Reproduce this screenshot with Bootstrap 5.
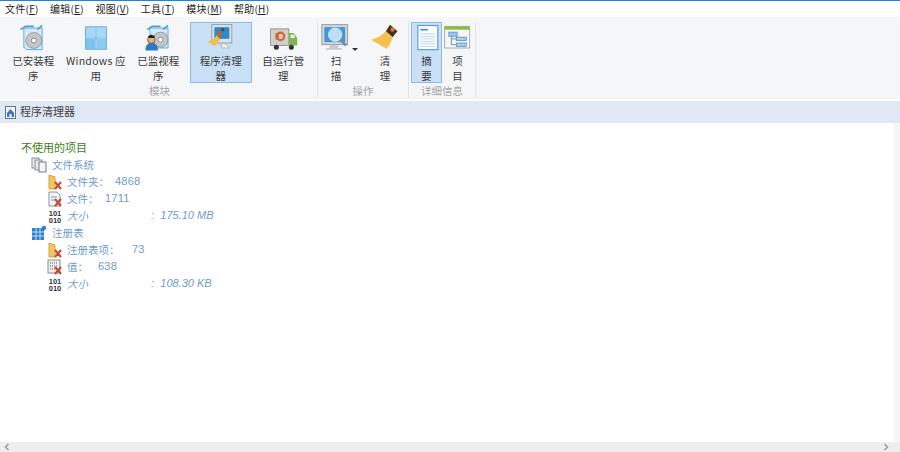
<!DOCTYPE html>
<html lang="zh"><head><meta charset="utf-8"><title>程序清理器</title>
<link href="https://cdn.jsdelivr.net/npm/bootstrap@5.3.0/dist/css/bootstrap.min.css" rel="stylesheet">
<style>
html,body{height:452px;overflow:hidden;background:#fff}
body{font-family:"Noto Sans CJK SC","Liberation Sans",sans-serif;font-size:11px;color:#333;line-height:1.2}
.shell{height:452px;border-top:1px solid #1b86d8}
.menubar{height:16px;padding-left:5px;gap:11.5px;font-size:10px;letter-spacing:.25px;color:#222;align-items:center}
.ribbon{height:82px;background:#f5f6f7;padding:5px 0 0 2px}
.rgroup{border-right:1px solid #e3e4e6;height:76px;position:relative}
.gwide{width:316px}
.gact{width:91px}
.gdetail{width:67px;padding-left:2px}
.rbtn{width:62.5px;height:61px;border:1px solid transparent;align-items:center;text-align:center;color:#3a3a3a;font-size:10.5px;line-height:15px;white-space:nowrap}
.rbtn svg{height:30px;width:30px;flex:none}
.rbtn.on{background:#c9e0f7;border-color:#8fbce6}
.narrow{width:31px}
.scanbtn{width:36px;position:relative}
.cleanbtn{width:46px;margin-left:8px}
.caret-mark{position:absolute;left:33px;top:25px;width:0;height:0;border-left:3px solid transparent;border-right:3px solid transparent;border-top:3px solid #333}
.latin{letter-spacing:.3px}
.glabel{position:absolute;left:0;right:0;bottom:0;height:15px;text-align:center;color:#a3a5a8;font-size:10.5px;line-height:15px}
.crumb{height:23px;margin-top:2px;background:#dfe8f4;padding-left:5px;gap:4px;align-items:center;font-size:11px;color:#444}
.mainrow{height:320px}
.content{padding-top:16px}
.trow{height:17px;align-items:center;color:#6f9bd1;font-size:10.5px;white-space:nowrap}
.trow svg{width:16px;height:16px;flex:none;margin-right:4px}
.l0{padding-left:21px;color:#3f7d1c;font-size:11px}
.l1{padding-left:31px}
.l1 svg{margin-right:5px}
.l2{padding-left:47px}
.val{font-family:"Liberation Sans",sans-serif;font-size:11px;letter-spacing:.2px}
.ital{font-style:italic}
.sizeval{letter-spacing:0;margin-left:6px}
.k1{width:48px}.k2{width:38px}.k3{width:65px}.k4{width:31px}.k5{width:84px}
.vbar{width:6px;background:#f5f5f5;position:relative}
.hbar{height:10px;background:#eeeeee;justify-content:space-between;align-items:center;padding:0 10px 0 3px}
.chev{width:8px;height:8px}
</style></head><body>
<div class="shell d-flex flex-column">
<div class="menubar d-flex"><span>文件(<u>F</u>)</span><span>编辑(<u>E</u>)</span><span>视图(<u>V</u>)</span><span>工具(<u>T</u>)</span><span>模块(<u>M</u>)</span><span>帮助(<u>H</u>)</span></div>
<div class="ribbon d-flex">
 <div class="rgroup gwide d-flex">
  <div class="rbtn d-flex flex-column"><svg viewBox="0 0 36 36"><path d="M7 6h22v26H10l-3-3z" fill="#d7e8f6" stroke="#4ba0dc"/><path d="M3 8l6-4h10M29 3l-6 5" fill="none" stroke="#4ba0dc" stroke-width="2"/><circle cx="19" cy="21" r="9.500" fill="#c3c6cb" stroke="#8b9097"/><circle cx="19" cy="21" r="3" fill="#fff" stroke="#777"/></svg><span>已安装程<br>序</span></div>
  <div class="rbtn d-flex flex-column"><svg viewBox="0 0 36 36"><rect x="6" y="5" width="11" height="12" fill="#a9d7f6"/><rect x="19" y="5" width="11" height="12" fill="#a9d7f6"/><rect x="6" y="19" width="11" height="12" fill="#7cc3f0"/><rect x="19" y="19" width="11" height="12" fill="#8ccaf2"/><path d="M5.500 4.500h25v27h-25zM18 5v26M6 18h24" fill="none" stroke="#3e9ee0"/></svg><span><span class="latin">Windows</span> 应<br>用</span></div>
  <div class="rbtn d-flex flex-column"><svg viewBox="0 0 36 36"><path d="M8 6h22v24H10z" fill="#d7e8f6" stroke="#4ba0dc"/><path d="M5 8l6-4h10M30 3l-6 5" fill="none" stroke="#4ba0dc" stroke-width="2"/><circle cx="21" cy="20" r="9" fill="#c3c6cb" stroke="#8b9097"/><circle cx="21" cy="20" r="3" fill="#fff" stroke="#777"/><circle cx="10" cy="20" r="4.500" fill="#e9b27c" stroke="#6b4a2a"/><path d="M3 33c0-8 4-9 7-9s8 1 8 9z" fill="#2f78c8"/><path d="M6 16q4-4 8 0l-1 2H7z" fill="#222"/></svg><span>已监视程<br>序</span></div>
  <div class="rbtn on d-flex flex-column"><svg viewBox="0 0 36 36"><rect x="7" y="2" width="24" height="22" fill="#dfe3e6" stroke="#8c9299"/><rect x="10" y="5" width="18" height="14" fill="#2f88cc"/><path d="M18 25h6l2 3c3 1 4 2 1 2h-8z" fill="#eef0f2" stroke="#aeb2b6"/><path d="M12 14l5-4 2 3-4 5z" fill="#c8641e"/><path d="M13 15l4 5-7 8-8-6c3 0 7-2 11-7z" fill="#f3c04e"/><circle cx="20" cy="8" r="2" fill="#7a3d18"/></svg><span>程序清理<br>器</span></div>
  <div class="rbtn d-flex flex-column"><svg viewBox="0 0 36 36"><path d="M3 7h22v20H3z" fill="#cfcfcc" stroke="#8a8a88"/><path d="M25 12h6l4 6v9H25z" fill="#7fb35a"/><rect x="27" y="14" width="5" height="4" fill="#e6f2dc"/><circle cx="10" cy="29" r="3" fill="#333"/><circle cx="28" cy="29" r="3" fill="#333"/><circle cx="15" cy="16" r="4.500" fill="none" stroke="#d4662a" stroke-width="2.500"/><path d="M9 12h4v8H9z" fill="#d4662a"/></svg><span>自运行管<br>理</span></div>
  <div class="glabel">模块</div>
 </div>
 <div class="rgroup gact d-flex">
  <div class="rbtn scanbtn d-flex flex-column"><svg viewBox="0 0 36 36"><rect x="1" y="2" width="31" height="24" fill="#d3d6d8" stroke="#8a9096"/><rect x="4" y="5" width="25" height="18" fill="#3f97dc"/><path d="M11 26h9l1 4h4v2H6v-2h4z" fill="#c8ccd0"/><circle cx="17" cy="14" r="8" fill="#bcdff5" stroke="#e6f3fb"/><path d="M23 20l7 7" stroke="#6c8fb8" stroke-width="3"/></svg><span>扫<br>描</span><i class="caret-mark"></i></div>
  <div class="rbtn cleanbtn d-flex flex-column"><svg viewBox="0 0 36 36"><path d="M24 2l9 8-6 7-8-7z" fill="#4a3020"/><circle cx="27" cy="8" r="2.500" fill="#e07a2a"/><path d="M19 10l8 7c-1 5-4 10-7 14L1 20c7-1 13-5 18-10z" fill="#f4c14e"/></svg><span>清<br>理</span></div>
  <div class="glabel">操作</div>
 </div>
 <div class="rgroup gdetail d-flex">
  <div class="rbtn on narrow d-flex flex-column"><svg viewBox="0 0 36 36"><rect x="7" y="3" width="24" height="29" fill="#fff" stroke="#5ba2dc" stroke-width="1.500"/><path d="M10 8h9" stroke="#3d8bd2" stroke-width="2"/><path d="M10 13h18M10 16h18M10 19h18M10 22h18M10 25h18M10 28h18" stroke="#a9cdea"/></svg><span>摘<br>要</span></div>
  <div class="rbtn narrow d-flex flex-column"><svg viewBox="0 0 36 36"><rect x="2" y="4" width="30" height="26" fill="#f4f6f8" stroke="#9aa0a6"/><rect x="2" y="4" width="30" height="4" fill="#8dbb3e"/><rect x="7" y="11" width="10" height="5" fill="#9cc6ee" stroke="#5d94c9"/><rect x="16" y="17" width="12" height="4" fill="#a9cdea" stroke="#5d94c9"/><rect x="16" y="24" width="12" height="4" fill="#a9cdea" stroke="#5d94c9"/><path d="M10 16v10h6M10 19h6" fill="none" stroke="#777"/></svg><span>项<br>目</span></div>
  <div class="glabel">详细信息</div>
 </div>
</div>
<div class="crumb d-flex"><svg width="11" height="13" viewBox="0 0 11 13"><rect x=".5" y=".5" width="10" height="12" fill="#f6f7f8" stroke="#6b7178"/><path d="M5.500 3L2 7v4h7V7z" fill="#2f78c8"/><rect x="4.500" y="8" width="2" height="3" fill="#fff"/></svg><span>程序清理器</span></div>
<div class="mainrow d-flex">
 <div class="content flex-grow-1">
  <div class="trow d-flex l0">不使用的项目</div>
  <div class="trow d-flex l1"><svg viewBox="0 0 16 16"><rect x="1" y="1" width="7" height="10" fill="#eee" stroke="#8a8f96"/><rect x="4" y="3" width="7" height="10" fill="#e4e6e8" stroke="#8a8f96"/><rect x="8" y="5" width="7" height="10" fill="#f4f5f6" stroke="#747a82"/></svg><span>文件系统</span></div>
  <div class="trow d-flex l2"><svg viewBox="0 0 16 16"><path d="M2 1l6 2v12H2z" fill="#f2c560" stroke="#d4a23c"/><path d="M8 8l6 7M14 8l-6 7" stroke="#c8452a" stroke-width="2"/></svg><span class="k1">文件夹：</span><span class="val">4868</span></div>
  <div class="trow d-flex l2"><svg viewBox="0 0 16 16"><path d="M2 1h8l3 3v11H2z" fill="#f2f4f6" stroke="#8a8f96"/><path d="M4 6h6M4 9h4" stroke="#6d9ed0"/><path d="M8 8l6 7M14 8l-6 7" stroke="#c8452a" stroke-width="2"/></svg><span class="k2">文件：</span><span class="val">1711</span></div>
  <div class="trow d-flex l2"><svg viewBox="0 0 16 16"><text x="8" y="7.500" text-anchor="middle" font-family="Liberation Sans" font-weight="700" font-size="7.500" fill="#2c3442">101</text><text x="8" y="15" text-anchor="middle" font-family="Liberation Sans" font-weight="700" font-size="7.500" fill="#2c3442">010</text></svg><span class="ital k5">大小</span><span class="val ital">:</span><span class="val ital sizeval">175.10 MB</span></div>
  <div class="trow d-flex l1"><svg viewBox="0 0 16 16"><rect x="1" y="3" width="12" height="12" fill="#2f7fd0"/><path d="M5 3v12M9 3v12M1 7h12M1 11h12" stroke="#bcdcf5"/><circle cx="13" cy="3" r="2.200" fill="#2f7fd0"/></svg><span>注册表</span></div>
  <div class="trow d-flex l2"><svg viewBox="0 0 16 16"><path d="M2 1l6 2v12H2z" fill="#f2c560" stroke="#d4a23c"/><path d="M8 8l6 7M14 8l-6 7" stroke="#c8452a" stroke-width="2"/></svg><span class="k3">注册表项：</span><span class="val">73</span></div>
  <div class="trow d-flex l2"><svg viewBox="0 0 16 16"><rect x="1" y="1" width="12" height="13" fill="#eceef0" stroke="#8a8f96"/><path d="M3 4h8M3 7h8M3 10h5" stroke="#5a5f66" stroke-dasharray="1 1"/><path d="M8 8l6 7M14 8l-6 7" stroke="#c8452a" stroke-width="2"/></svg><span class="k4">值：</span><span class="val">638</span></div>
  <div class="trow d-flex l2"><svg viewBox="0 0 16 16"><text x="8" y="7.500" text-anchor="middle" font-family="Liberation Sans" font-weight="700" font-size="7.500" fill="#2c3442">101</text><text x="8" y="15" text-anchor="middle" font-family="Liberation Sans" font-weight="700" font-size="7.500" fill="#2c3442">010</text></svg><span class="ital k5">大小</span><span class="val ital">:</span><span class="val ital sizeval">108.30 KB</span></div>
 </div>
 <div class="vbar"></div>
</div>
<div class="hbar d-flex"><svg class="chev" viewBox="0 0 8 8"><path d="M5.500 1L2.500 4l3 3" fill="none" stroke="#999" stroke-width="1.500"/></svg><svg class="chev" viewBox="0 0 8 8"><path d="M2.500 1l3 3-3 3" fill="none" stroke="#999" stroke-width="1.500"/></svg></div>
</div>
</body></html>
